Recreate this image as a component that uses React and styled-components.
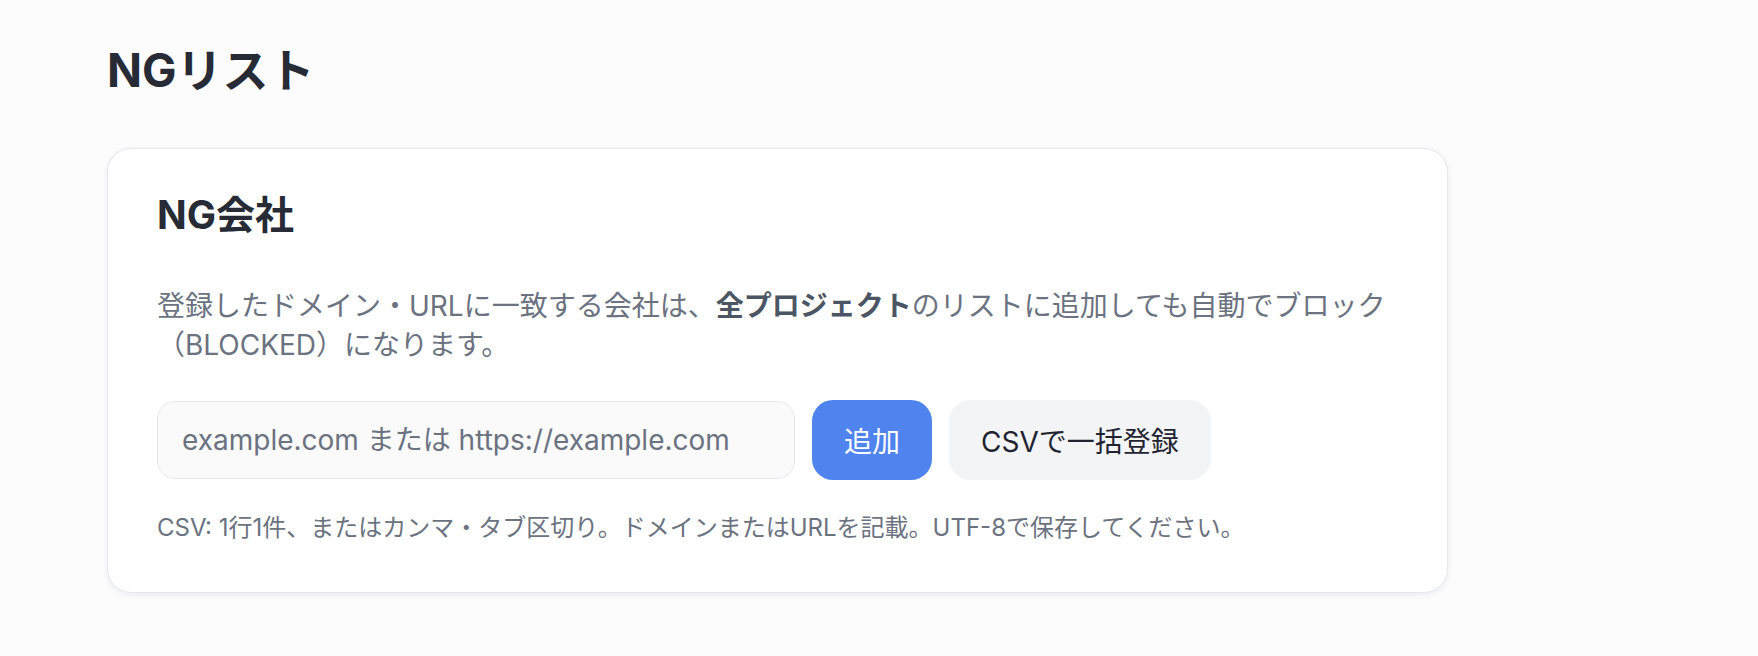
import styled, { createGlobalStyle } from "styled-components";

const GlobalStyle = createGlobalStyle`
  html, body {
    margin: 0;
    padding: 0;
    background: #fcfcfd;
  }
  body {
    font-family: Inter, "Noto Sans CJK JP", sans-serif;
    color: #262b36;
  }
`;

export default function App() {
  return (
    <>
      <GlobalStyle />
      <Page>
        <PageTitle>NGリスト</PageTitle>
        <Card>
          <CardTitle>NG会社</CardTitle>
          <Description>
            登録したドメイン・URLに一致する会社は、<Strong>全プロジェクト</Strong>
            のリストに追加しても自動でブロック（BLOCKED）になります。
          </Description>
          <FormRow>
            <UrlInput placeholder="example.com または https://example.com" />
            <Button $variant="primary">追加</Button>
            <Button>CSVで一括登録</Button>
          </FormRow>
          <Hint>
            CSV: 1行1件、またはカンマ・タブ区切り。ドメインまたはURLを記載。UTF-8で保存してください。
          </Hint>
        </Card>
      </Page>
    </>
  );
}

const Page = styled.div`
  padding: 36px 107px 60px;
  max-width: 1341px;
`;

const PageTitle = styled.h1`
  margin: 0 0 44px;
  font-size: 46px;
  line-height: 68px;
  font-weight: 700;
  color: #262b36;
`;

const Card = styled.section`
  box-sizing: border-box;
  width: 1341px;
  background: #ffffff;
  border: 1.5px solid #e5e7eb;
  border-radius: 24px;
  box-shadow: 0 2px 6px rgba(17, 24, 39, 0.07);
  padding: 39px 49px 46px;
`;

const CardTitle = styled.h2`
  margin: 0 0 45px;
  font-size: 39px;
  line-height: 54px;
  font-weight: 700;
  color: #262b36;
`;

const Description = styled.p`
  margin: 0 0 35px;
  font-size: 28px;
  line-height: 39px;
  color: #6b7280;
`;

const Strong = styled.strong`
  font-weight: 700;
  color: #4b5563;
`;

const FormRow = styled.div`
  display: flex;
  align-items: center;
  gap: 17px;
`;

const UrlInput = styled.input`
  box-sizing: border-box;
  width: 638px;
  height: 78px;
  padding: 0 24px;
  border: 1.5px solid #e5e7eb;
  border-radius: 18px;
  background: #fafafb;
  font-family: inherit;
  font-size: 28px;
  color: #262b36;
  outline: none;

  &::placeholder {
    color: #6b7280;
  }
`;

const Button = styled.button`
  box-sizing: border-box;
  height: 80px;
  padding: 0 32px;
  border: none;
  border-radius: 21px;
  font-family: inherit;
  font-size: 28px;
  cursor: pointer;
  background: ${(p) => (p.$variant === "primary" ? "#4f84ef" : "#f3f4f6")};
  color: ${(p) => (p.$variant === "primary" ? "#ffffff" : "#1f2430")};
`;

const Hint = styled.p`
  margin: 30px 0 0;
  font-size: 24px;
  line-height: 36px;
  color: #6b7280;
`;
